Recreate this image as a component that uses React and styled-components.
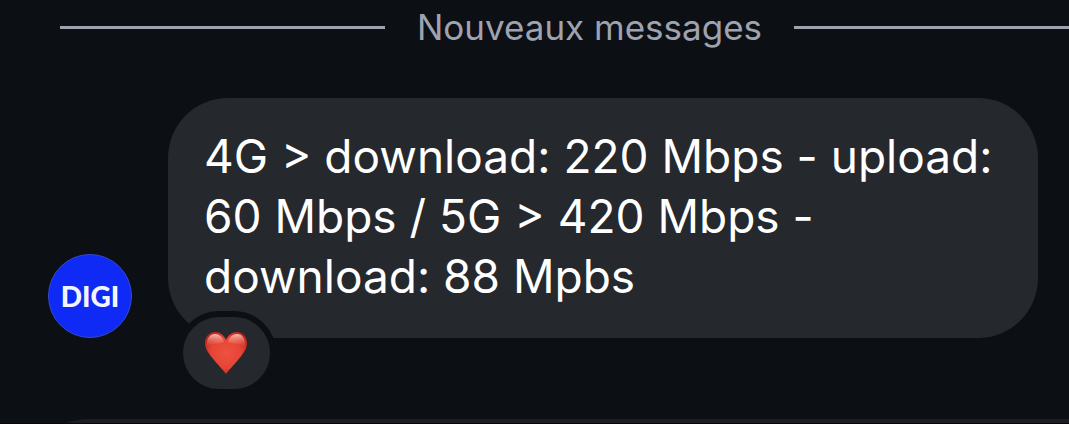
import React from 'react';
import styled, { createGlobalStyle } from 'styled-components';

const GlobalStyle = createGlobalStyle`
  * {
    box-sizing: border-box;
  }

  body {
    margin: 0;
    background: #0c0f14;
    font-family: Inter, 'Liberation Sans', sans-serif;
  }
`;

const Chat = styled.main`
  display: flex;
  flex-direction: column;
  height: 100vh;
  overflow: hidden;
  border-bottom: 1px solid #090509;
`;

const Divider = styled.div`
  display: flex;
  align-items: center;
  gap: 32px;
  padding: 3px 0 0 60px;
  color: #9fa3b0;
  font-size: 35px;
  line-height: 48px;
  white-space: nowrap;

  &::before,
  &::after {
    content: '';
    height: 3px;
    background: #9fa3b0;
  }

  &::before {
    flex: 325;
  }

  &::after {
    flex: 275;
  }
`;

const MessageRow = styled.article`
  display: flex;
  align-items: flex-end;
  gap: 36px;
  padding: 47px 31px 0 48px;
`;

const Avatar = styled.div`
  display: flex;
  align-items: center;
  justify-content: center;
  flex: none;
  width: 84px;
  height: 84px;
  border: 1px solid #3549d4;
  border-radius: 50%;
  background: #0e2af4;
  color: #f4f4ff;
  font-family: Lato, sans-serif;
  font-size: 28px;
  font-weight: 900;
`;

const Bubble = styled.div`
  position: relative;
  flex: 1;
  padding: 28px 36px 32px;
  border-radius: 60px;
  background: #25282d;
`;

const MessageText = styled.p`
  margin: 0;
  color: #fff;
  font-size: 46px;
  line-height: 60px;
`;

const Reaction = styled.button`
  position: absolute;
  left: 9px;
  bottom: -57px;
  display: flex;
  align-items: center;
  justify-content: center;
  width: 99px;
  height: 84px;
  padding: 0;
  border: 6px solid #0c0f14;
  border-radius: 42px;
  background: #25282d;
  cursor: pointer;
`;

const Composer = styled.footer`
  flex: none;
  height: 120px;
  margin: 81px 0 0 28px;
  border-radius: 60px 0 0 60px;
  background: #1b1d22;
`;

const Heart = () => (
  <svg width="44" height="44" viewBox="0 0 44 44" aria-hidden="true">
    <defs>
      <radialGradient id="heartBody" cx="0.5" cy="0.5" r="0.6">
        <stop offset="0" stopColor="#ee5240" />
        <stop offset="0.6" stopColor="#e64434" />
        <stop offset="1" stopColor="#b92319" />
      </radialGradient>
      <linearGradient id="heartShine" x1="0" y1="0" x2="0" y2="1">
        <stop offset="0" stopColor="#ffd9d0" stopOpacity="0.85" />
        <stop offset="1" stopColor="#f47663" stopOpacity="0" />
      </linearGradient>
    </defs>
    <path
      d="M21 43C19 40 14 35 9 29C4 23 0 18 0 12C0 6 4 1 10 1C15 1 19 4 21 9C23 4 27 1 32 1C38 1 42 6 42 12C42 18 38 23 33 29C28 35 23 40 21 43Z"
      fill="url(#heartBody)"
    />
    <path
      d="M2 13C2 6 6 3 10 3C14 3 18 6 19 11C15 14 6 11 2 16Z"
      fill="url(#heartShine)"
    />
    <path
      d="M40 13C40 6 36 3 32 3C28 3 24 6 23 11C27 14 36 11 40 16Z"
      fill="url(#heartShine)"
    />
  </svg>
);

const App = () => (
  <>
    <GlobalStyle />
    <Chat>
      <Divider>Nouveaux messages</Divider>
      <MessageRow>
        <Avatar>DIGI</Avatar>
        <Bubble>
          <MessageText>
            4G &gt; download: 220 Mbps - upload: 60 Mbps / 5G &gt; 420 Mbps - download: 88 Mpbs
          </MessageText>
          <Reaction type="button" aria-label="Love">
            <Heart />
          </Reaction>
        </Bubble>
      </MessageRow>
      <Composer />
    </Chat>
  </>
);

export default App;
